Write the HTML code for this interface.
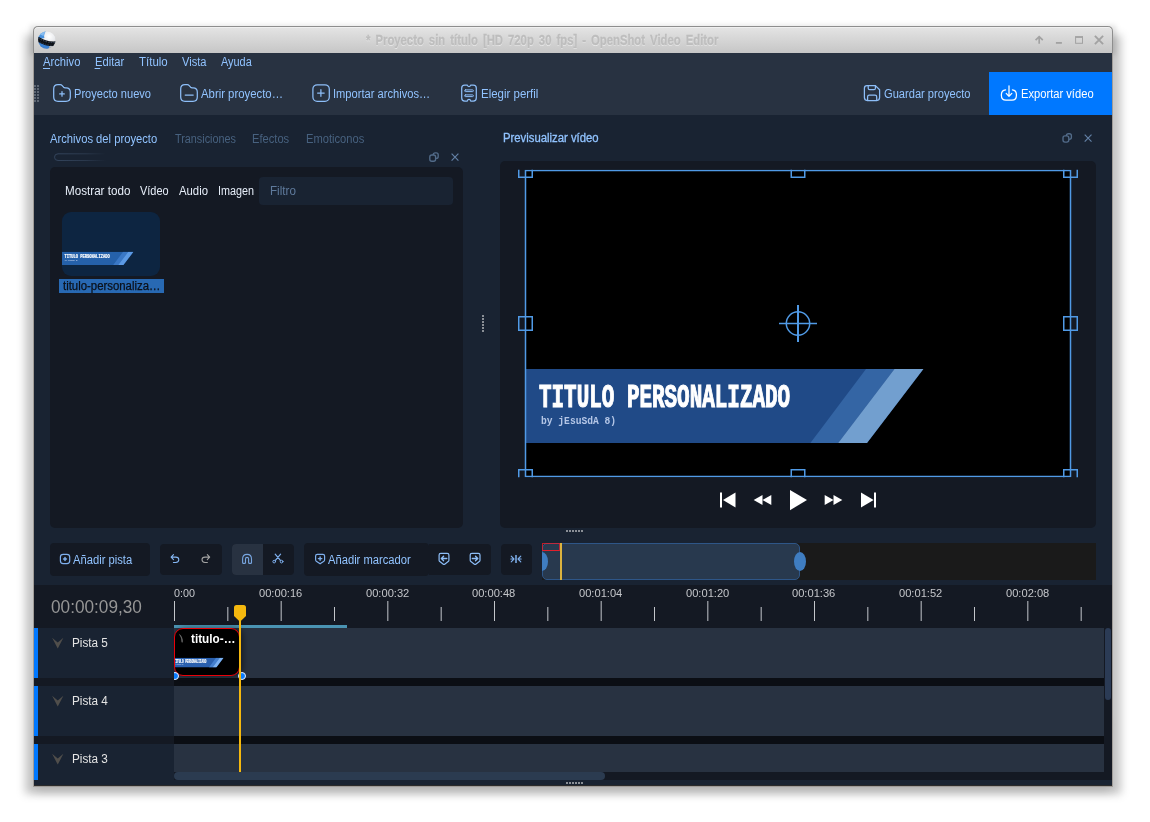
<!DOCTYPE html>
<html lang="es">
<head>
<meta charset="utf-8">
<title>* Proyecto sin título [HD 720p 30 fps] - OpenShot Video Editor</title>
<style>
html,body{margin:0;padding:0;background:#fff;}
body{width:1150px;height:822px;overflow:hidden;font-family:"Liberation Sans",sans-serif;}
#app{position:relative;width:1150px;height:822px;overflow:hidden;}
#app div,#app span.t,#app svg{position:absolute;}
.t{white-space:pre;transform-origin:0 50%;}
#tl{left:0;top:0;width:1150px;height:822px;will-change:transform;}
/* window */
#shadow{left:25px;top:35px;width:1096px;height:759px;background:rgba(0,0,0,.225);filter:blur(4.5px);}
#shadow3{left:30px;top:24.5px;width:1086px;height:30px;background:rgba(0,0,0,.1);filter:blur(2.5px);}
#shadow2{left:36px;top:720px;width:1074px;height:73px;background:rgba(0,0,0,.09);filter:blur(4.5px);}
#win{left:33px;top:26px;width:1080px;height:761px;border-radius:5px 5px 0 0;overflow:hidden;background:#a09c98;}
#winbg{left:1px;top:27px;width:1078px;height:732px;background:#192332;border-bottom:1px solid #2b2b2b;}
#titlebar{left:0;top:0;width:1080px;height:27px;background:linear-gradient(#e6e6e6,#dcdcdc 30%,#c6c6c6);
  box-shadow:inset 0 1px 0 #8e8e8e, inset 1px 0 0 #8e8e8e, inset -1px 0 0 #8e8e8e, inset 0 2px 0 #f0f0f0;border-radius:5px 5px 0 0;}
.bar{background:#283241;}
.panel{background:#141923;border-radius:5px;}
.box{background:#141923;border-radius:4px;}
.frame{width:545px;height:306px;background:#000;overflow:hidden;transform-origin:0 0;}
.frame .bn{left:0;top:198.5px;width:400px;height:74px;}
.ft1{left:13.5px;font-weight:700;color:#fff;white-space:pre;transform-origin:0 50%;}

</style>
</head>
<body>
<div id="app">
<div id="shadow"></div><div id="shadow2"></div><div id="shadow3"></div>
<div id="win">
  <div id="titlebar"></div>
  <div id="winbg"></div>
</div>
<!-- menubar + toolbar -->
<div class="bar" style="left:34px;top:53px;width:1078px;height:62px;"></div>
<div style="left:989px;top:72px;width:123px;height:43px;background:#0078ff;"></div>
<!-- left dock -->
<div class="panel" style="left:50px;top:167px;width:413px;height:361px;"></div>
<div style="left:259px;top:177px;width:194px;height:28px;background:#192332;border-radius:4px;"></div>
<div style="left:62px;top:212px;width:98px;height:64px;border-radius:9px;background:#0d2541;overflow:hidden;">
  <div class="frame" style="left:0;top:4.3px;transform:scale(0.1798);background:transparent;">
    <svg class="bn" viewBox="0 0 400 74"><polygon points="0,0 397.4,0 341,74 0,74" fill="#2561aa"/><polygon points="340,0 368.5,0 312.2,74 284.4,74" fill="#3a78c6"/><polygon points="368.5,0 397.4,0 341,74 312.2,74" fill="#5c9ae4"/></svg>
    <span class="ft1" style="position:absolute;left:13.5px;top:210px;font-family:'Liberation Mono',monospace;font-size:33px;line-height:36px;transform:scaleX(0.634);-webkit-text-stroke:1.2px #fff;">TITULO PERSONALIZADO</span>
    <span class="ft1" style="position:absolute;left:15.4px;top:243.4px;font-family:'Liberation Mono',monospace;font-size:11px;line-height:14px;color:#b4c6e6;transform:scaleX(0.875);">by jEsuSdA 8)</span>
  </div>
</div>
<div style="left:59px;top:279px;width:105px;height:14px;background:#2869b3;"></div>
<!-- right dock -->
<div class="panel" style="left:500px;top:161px;width:596px;height:367px;"></div>
<div class="frame" style="left:525.5px;top:170.5px;">
  <svg class="bn" viewBox="0 0 400 74"><polygon points="0,0 397.4,0 341,74 0,74" fill="#204a87"/><polygon points="340,0 368.5,0 312.2,74 284.4,74" fill="#3465a4"/><polygon points="368.5,0 397.4,0 341,74 312.2,74" fill="#729fcf"/></svg>
  <span class="ft1" style="position:absolute;left:13.5px;top:210px;font-family:'Liberation Mono',monospace;font-size:33px;line-height:36px;transform:scaleX(0.634);-webkit-text-stroke:1.2px #fff;">TITULO PERSONALIZADO</span>
  <span class="ft1" style="position:absolute;left:15.4px;top:243.4px;font-family:'Liberation Mono',monospace;font-size:11px;line-height:14px;color:#b4c6e6;transform:scaleX(0.875);">by jEsuSdA 8)</span>
</div>
<svg style="left:500px;top:161px;" width="596" height="367" viewBox="500 161 596 367">
  <defs><clipPath id="vc"><rect x="510" y="169.8" width="580" height="307.4"/></clipPath></defs>
  <g clip-path="url(#vc)" fill="none" stroke="#509ae6" stroke-width="1.5">
    <rect x="525.5" y="170.5" width="545" height="306"/>
    <rect x="518.75" y="163.75" width="13.5" height="13.5"/>
    <rect x="791.25" y="163.75" width="13.5" height="13.5"/>
    <rect x="1063.75" y="163.75" width="13.5" height="13.5"/>
    <rect x="518.75" y="316.75" width="13.5" height="13.5"/>
    <rect x="1063.75" y="316.75" width="13.5" height="13.5"/>
    <rect x="518.75" y="469.75" width="13.5" height="13.5"/>
    <rect x="791.25" y="469.75" width="13.5" height="13.5"/>
    <rect x="1063.75" y="469.75" width="13.5" height="13.5"/>
    <circle cx="798" cy="323.5" r="11.7"/>
    <path d="M779 323.5H817" />
    <path d="M798 305V342" stroke-width="2"/>
  </g>
  <!-- playback controls -->
  <g fill="#fff">
    <rect x="720" y="492.5" width="2" height="15"/><path d="M735.5 492.5V507.5L723 500Z"/>
    <path d="M762.5 495V505L753.7 500Z"/><path d="M771.3 495V505L762.5 500Z"/>
    <path d="M790 490L807 500L790 510.2Z"/>
    <path d="M824.7 495V505L833.5 500Z"/><path d="M833.5 495V505L842.3 500Z"/>
    <path d="M861 492.5V507.5L873.6 500Z"/><rect x="874" y="492.5" width="2" height="15"/>
  </g>
</svg>
<!-- timeline toolbar -->
<div class="box" style="left:50px;top:543px;width:100px;height:33px;"></div>
<div class="box" style="left:160px;top:544px;width:62px;height:31px;"></div>
<div class="box" style="left:232px;top:544px;width:62px;height:31px;overflow:hidden;"><div style="left:0;top:0;width:31px;height:31px;background:#283241;"></div></div>
<div class="box" style="left:429px;top:544px;width:62px;height:31px;border-radius:0 4px 4px 0;"></div>
<div class="box" style="left:304px;top:543px;width:125px;height:33px;"></div>
<div class="box" style="left:501px;top:544px;width:31px;height:31px;"></div>
<!-- zoom slider -->
<div style="left:542px;top:543px;width:554px;height:37px;background:#1a1a1a;"></div>
<div style="left:542px;top:543px;width:258px;height:37px;background:#28394e;border:1px solid #2e5688;border-radius:5px;box-sizing:border-box;"></div>
<div style="left:542px;top:543px;width:18px;height:8px;border:1px solid rgba(226,32,44,.8);border-bottom-color:#e2202c;box-sizing:border-box;"></div>
<div style="left:560px;top:543px;width:1.6px;height:37px;background:#dcb33e;"></div>
<div style="left:542px;top:552px;width:6px;height:19px;overflow:hidden;"><div style="left:-6px;top:0;width:12px;height:19px;border-radius:50%;background:#3f7dc1;"></div></div>
<div style="left:794px;top:552px;width:12px;height:19px;border-radius:50%;background:#3f7dc1;"></div>
<!-- ruler -->
<div style="left:34px;top:585px;width:1078px;height:43px;background:#141923;"></div>
<div style="left:174px;top:625px;width:173px;height:3px;background:#4a93b2;"></div>
<!-- tracks -->
<div style="left:34px;top:628px;width:140px;height:144px;background:#141923;"></div>
<div style="left:174px;top:628px;width:930px;height:144px;background:#0b0e14;"></div>
<div style="left:1104px;top:628px;width:8px;height:152px;background:#141923;"></div>
<div style="left:174px;top:772px;width:930px;height:8px;background:#141923;"></div>
<div style="left:34px;top:628px;width:140px;height:50px;background:#192332;"></div>
<div style="left:34px;top:686px;width:140px;height:50px;background:#192332;"></div>
<div style="left:34px;top:744px;width:140px;height:36px;background:#192332;"></div>
<div style="left:34px;top:628px;width:4px;height:50px;background:#0078ff;"></div>
<div style="left:34px;top:686px;width:4px;height:50px;background:#0078ff;"></div>
<div style="left:34px;top:744px;width:4px;height:36px;background:#0078ff;"></div>
<div style="left:174px;top:628px;width:930px;height:50px;background:#283241;"></div>
<div style="left:174px;top:686px;width:930px;height:50px;background:#283241;"></div>
<div style="left:174px;top:744px;width:930px;height:28px;background:#283241;"></div>
<div style="left:1105px;top:628px;width:6px;height:72px;border-radius:3px;background:#2b3b55;"></div>
<div style="left:174px;top:772px;width:431px;height:8px;border-radius:4px;background:#2b3b50;"></div>
<!-- clip -->
<div style="left:174px;top:628px;width:66px;height:48px;border-radius:9px;background:#000;border:1px solid #ea0008;box-sizing:border-box;overflow:hidden;box-shadow:3px 0 6px rgba(0,0,0,.45);">
  <div class="frame" style="left:-3.5px;top:2.5px;transform:scale(0.1297);background:transparent;">
    <svg class="bn" viewBox="0 0 400 74"><polygon points="0,0 397.4,0 341,74 0,74" fill="#2a60ae"/><polygon points="340,0 368.5,0 312.2,74 284.4,74" fill="#4480d0"/><polygon points="368.5,0 397.4,0 341,74 312.2,74" fill="#7cb2f2"/></svg>
    <span class="ft1" style="position:absolute;left:13.5px;top:210px;font-family:'Liberation Mono',monospace;font-size:33px;line-height:36px;transform:scale(0.634,1.4);-webkit-text-stroke:1.2px #fff;">TITULO PERSONALIZADO</span>
    <span class="ft1" style="position:absolute;left:15.4px;top:243.4px;font-family:'Liberation Mono',monospace;font-size:11px;line-height:14px;color:#b4c6e6;transform:scaleX(0.875);">by jEsuSdA 8)</span>
  </div>
</div>
<!-- overlay svg: ticks, playhead, icons -->
<svg style="left:0;top:0;" width="1150" height="822" viewBox="0 0 1150 822">
  <g id="ticks" stroke="#c3c6cb" stroke-width="1">
  <rect x="174.00" y="601" width="1" height="20" fill="#c3c6cb" stroke="none"/>
  <rect x="227.33" y="607" width="1" height="14" fill="#c3c6cb" stroke="none"/>
  <rect x="280.67" y="601" width="1" height="20" fill="#c3c6cb" stroke="none"/>
  <rect x="334.00" y="607" width="1" height="14" fill="#c3c6cb" stroke="none"/>
  <rect x="387.33" y="601" width="1" height="20" fill="#c3c6cb" stroke="none"/>
  <rect x="440.67" y="607" width="1" height="14" fill="#c3c6cb" stroke="none"/>
  <rect x="494.00" y="601" width="1" height="20" fill="#c3c6cb" stroke="none"/>
  <rect x="547.33" y="607" width="1" height="14" fill="#c3c6cb" stroke="none"/>
  <rect x="600.67" y="601" width="1" height="20" fill="#c3c6cb" stroke="none"/>
  <rect x="654.00" y="607" width="1" height="14" fill="#c3c6cb" stroke="none"/>
  <rect x="707.33" y="601" width="1" height="20" fill="#c3c6cb" stroke="none"/>
  <rect x="760.67" y="607" width="1" height="14" fill="#c3c6cb" stroke="none"/>
  <rect x="814.00" y="601" width="1" height="20" fill="#c3c6cb" stroke="none"/>
  <rect x="867.33" y="607" width="1" height="14" fill="#c3c6cb" stroke="none"/>
  <rect x="920.67" y="601" width="1" height="20" fill="#c3c6cb" stroke="none"/>
  <rect x="974.00" y="607" width="1" height="14" fill="#c3c6cb" stroke="none"/>
  <rect x="1027.33" y="601" width="1" height="20" fill="#c3c6cb" stroke="none"/>
  <rect x="1080.67" y="607" width="1" height="14" fill="#c3c6cb" stroke="none"/>
  </g>
  <!-- keyframe dots -->
  <circle cx="175" cy="676" r="3.5" fill="#0a7cff" stroke="#e8f0ff" stroke-width="1" clip-path="url(#kc)"/>
  <clipPath id="kc"><rect x="174" y="670" width="100" height="12"/></clipPath>
  <circle cx="242" cy="676" r="3.5" fill="#0a7cff" stroke="#e8f0ff" stroke-width="1"/>
  <!-- playhead -->
  <rect x="239" y="615" width="2" height="157" fill="#f5b80e"/>
  <path d="M234 607.5Q234 605 236.5 605H243.5Q246 605 246 607.5V616L240.8 621H239.2L234 616Z" fill="#f5b80e"/>
  <!-- app logo -->
  <defs>
    <radialGradient id="lg" cx="0.62" cy="0.3" r="0.75"><stop offset="0" stop-color="#ffffff"/><stop offset="0.55" stop-color="#e4e6ea"/><stop offset="1" stop-color="#8f949c"/></radialGradient>
    <clipPath id="lc"><circle cx="46.85" cy="40" r="8.8"/></clipPath>
  </defs>
  <g clip-path="url(#lc)">
    <circle cx="46.85" cy="40" r="8.8" fill="url(#lg)"/>
    <path d="M36 30H46.8Q43.2 33.5 44.4 38L36 40Z" fill="#4a92de"/>
    <path d="M39.5 34.2Q41.5 31.8 45.6 31.6Q43.6 33.8 43.6 36Z" fill="#86bdf0"/>
    <path d="M37 42L49.5 45.5Q49.5 48 47.5 50H37Z" fill="#3a80d2"/>
    <path d="M37.2 38.6Q46 44.6 56.6 43.6" stroke="#0c1016" stroke-width="4.7" fill="none"/>
    <path d="M38.2 37.9Q46.4 43.4 56 42.5" stroke="#4d5b73" stroke-width="0.9" stroke-dasharray="1.5 1.2" fill="none"/>
    <path d="M37.6 40.3Q46 46.2 56 45.2" stroke="#3a4659" stroke-width="0.8" stroke-dasharray="1.5 1.2" fill="none"/>
  </g>
  <!-- window buttons -->
  <g stroke="#a2a2a2" fill="none" stroke-width="1.7">
    <path d="M1039.2 43.8V37.2M1035.6 40.2L1039.2 36.6L1042.8 40.2" stroke-linejoin="miter"/>
    <path d="M1055.9 42.9H1061.9" stroke-width="1.8"/>
    <rect x="1075.6" y="37.2" width="6.9" height="6.1" stroke-width="1"/><path d="M1075.1 36.9H1083" stroke-width="1.6"/>
    <path d="M1094.9 35.9L1103.1 44.1M1103.1 35.9L1094.9 44.1" stroke-width="1.9"/>
  </g>
  <!-- menu mnemonics -->
  <rect x="43" y="68" width="7" height="1" fill="#91c3ff"/>
  <rect x="94.6" y="68" width="5.6" height="1" fill="#91c3ff"/>
  <!-- toolbar grip -->
  <g fill="#5d6673">
    <rect x="34" y="85" width="2" height="2"/><rect x="37" y="85" width="2" height="2"/><rect x="34" y="88" width="2" height="2"/><rect x="37" y="88" width="2" height="2"/><rect x="34" y="91" width="2" height="2"/><rect x="37" y="91" width="2" height="2"/><rect x="34" y="94" width="2" height="2"/><rect x="37" y="94" width="2" height="2"/><rect x="34" y="97" width="2" height="2"/><rect x="37" y="97" width="2" height="2"/><rect x="34" y="100" width="2" height="2"/><rect x="37" y="100" width="2" height="2"/>
  </g>
  <!-- toolbar icons -->
  <g fill="none" stroke="#8dbef8" stroke-width="1.25" stroke-linecap="round" stroke-linejoin="round">
    <path id="fold" d="M57.9 84.7H60.2Q61.4 84.7 62.2 85.6L63.6 87.2Q64.2 87.8 65.2 87.8H66.1Q70.3 87.8 70.3 92V97Q70.3 101.3 66 101.3H58Q53.7 101.3 53.7 97V88.9Q53.7 84.7 57.9 84.7Z"/>
    <path d="M62 91.6V96.2M59.7 93.9H64.3" stroke-width="1.25"/>
    <use href="#fold" x="127" y="0"/>
    <path d="M185.2 95.1H193.2"/>
    <rect x="312.9" y="84.8" width="16.4" height="16.5" rx="4.3"/>
    <path d="M320.9 89.7V96.3M317.6 93H324.2"/>
    <path d="M464.7 85H467.3Q467.6 86.6 469 86.6Q470.4 86.6 470.7 85H473.3Q476.3 85 476.3 88V98Q476.3 101 473.3 101H470.7Q470.4 99.4 469 99.4Q467.6 99.4 467.3 101H464.7Q461.7 101 461.7 98V88Q461.7 85 464.7 85Z"/>
    <rect x="464.6" y="89.9" width="8.8" height="1.7" rx="0.85" stroke-width="1"/>
    <rect x="464.6" y="94.9" width="8.8" height="1.7" rx="0.85" stroke-width="1"/>
    <path d="M867 85.6H875.4L879.6 89.8V97.6Q879.6 100.5 876.7 100.5H867.3Q864.4 100.5 864.4 97.6V88.2Q864.4 85.6 867 85.6Z"/>
    <path d="M868.2 85.8V88.2Q868.2 89.7 869.7 89.7H874Q875.4 89.7 875.4 88.2V85.8"/>
    <path d="M867.6 100.4V96.8Q867.6 95.1 869.3 95.1H875Q876.7 95.1 876.7 96.8V100.4"/>
  </g>
  <g fill="none" stroke="#ffffff" stroke-width="1.25" stroke-linecap="round" stroke-linejoin="round">
    <path d="M1005.6 89.8Q1001.4 90.2 1001.4 94.5V95.5Q1001.4 100.2 1006 100.2H1012Q1016.4 100.2 1016.4 95.5V94.5Q1016.4 90.2 1012.4 89.8"/>
    <path d="M1009 85.8V96M1006.2 93.4L1009 96.4L1011.8 93.4"/>
  </g>
  <!-- dock float / close icons -->
  <g fill="none" stroke="#526b89" stroke-width="1.35">
    <rect x="433.2" y="152.8" width="5" height="5.6" rx="2"/>
    <rect x="429.8" y="155" width="5.8" height="6.2" rx="2" fill="#192332"/>
    <rect x="1066.4" y="133.7" width="5" height="5.6" rx="2"/>
    <rect x="1063" y="135.9" width="5.8" height="6.2" rx="2" fill="#192332"/>
  </g>
  <g fill="none" stroke="#6381a6" stroke-width="1.15">
    <path d="M451.6 153.6L458.4 160.6M458.4 153.6L451.6 160.6"/>
    <path d="M1084.7 134.7L1091.5 141.7M1091.5 134.7L1084.7 141.7"/>
  </g>
  <!-- progress pill in dock title -->
  <defs><linearGradient id="pg" x1="0" x2="1"><stop offset="0" stop-color="#33445c"/><stop offset="0.6" stop-color="#2a384c"/><stop offset="1" stop-color="#192332"/></linearGradient></defs>
  <path d="M106 153.8H58Q54.5 153.8 54.5 157.2Q54.5 160.5 58 160.5H106" fill="none" stroke="url(#pg)" stroke-width="1"/>
  <!-- splitter handles -->
  <g fill="#8a8f96">
    <rect x="482" y="315" width="2" height="2"/><rect x="566" y="530" width="2" height="2"/><rect x="566" y="782" width="2" height="2"/><rect x="482" y="318" width="2" height="2"/><rect x="569" y="530" width="2" height="2"/><rect x="569" y="782" width="2" height="2"/><rect x="482" y="321" width="2" height="2"/><rect x="572" y="530" width="2" height="2"/><rect x="572" y="782" width="2" height="2"/><rect x="482" y="324" width="2" height="2"/><rect x="575" y="530" width="2" height="2"/><rect x="575" y="782" width="2" height="2"/><rect x="482" y="327" width="2" height="2"/><rect x="578" y="530" width="2" height="2"/><rect x="578" y="782" width="2" height="2"/><rect x="482" y="330" width="2" height="2"/><rect x="581" y="530" width="2" height="2"/><rect x="581" y="782" width="2" height="2"/>
  </g>
  <!-- timeline toolbar icons -->
  <g fill="none" stroke="#7fb0ee" stroke-width="1.2" stroke-linecap="round" stroke-linejoin="round">
    <rect x="60.4" y="554.3" width="9.3" height="9.3" rx="2.8"/>
    <path d="M65 557.6V560.4M63.6 559H66.4" stroke-width="1.5"/>
    <path d="M173.5 554.6L171.1 557.1L173.5 559.6M171.4 557.1H175.8Q178.8 557.1 178.8 559.8Q178.8 562.4 175.8 562.4H173.4" stroke="#86b8f5" stroke-width="1.05"/>
    <path d="M207.3 554.6L209.7 557.1L207.3 559.6M209.4 557.1H205Q202 557.1 202 559.8Q202 562.4 205 562.4H207.4" stroke="#a3a3a3" stroke-width="1.05"/>
    <path d="M242.6 562.4V559Q242.6 554.4 247.05 554.4Q251.5 554.4 251.5 559V562.4Q251.5 563.4 250.5 563.4H249.6Q248.6 563.4 248.6 562.4V559Q248.6 557.4 247.05 557.4Q245.5 557.4 245.5 559V562.4Q245.5 563.4 244.5 563.4H243.6Q242.6 563.4 242.6 562.4Z" stroke-width="1.1" stroke="#78a6e0"/>
    <path d="M275.2 554.2L280.4 560.4M280.6 554.2L275.4 560.4" stroke-width="1.2"/>
    <circle cx="274.2" cy="561.6" r="1.35" stroke-width="1"/><circle cx="281.6" cy="561.6" r="1.35" stroke-width="1"/>
    <path d="M317.3 554.4H322.9Q324.6 554.4 324.6 556.1V559.6Q324.6 560.6 323.9 561.2L320.1 563.8L316.3 561.2Q315.6 560.6 315.6 559.6V556.1Q315.6 554.4 317.3 554.4Z"/>
    <path d="M320.1 556.9V560.3M318.4 558.6H321.8" stroke-width="1.4"/>
    <path id="mk" d="M440.8 553.4H447.2Q448.9 553.4 448.9 555.1V560.2Q448.9 561 448.2 561.6L444.7 564.2Q444 564.7 443.3 564.2L439.8 561.6Q439.1 561 439.1 560.2V555.1Q439.1 553.4 440.8 553.4Z" stroke="#8dbef8"/>
    <path d="M441.4 558.5H446.8M443.6 556.2L441.3 558.5L443.6 560.8" stroke="#8dbef8" stroke-width="1.3"/>
    <use href="#mk" x="31.1" y="0"/>
    <path d="M472.3 558.5H477.7M475.5 556.2L477.8 558.5L475.5 560.8" stroke="#8dbef8" stroke-width="1.3"/>
    <path d="M516 555V563" stroke-width="1.8" stroke-linecap="butt" stroke="#6f9bd0"/>
    <path d="M511.2 556.2L514 559L511.2 561.8M510.8 559H513.6M520.8 556.2L518 559L520.8 561.8M521.2 559H518.4" stroke-width="1.1"/>
  </g>
  <!-- track chevrons -->
  <g fill="#504e4b">
    <path id="chev" d="M52.1 637.7L57.75 648.6L63.4 637.7L57.75 642.4Z"/>
    <use href="#chev" x="0" y="58"/>
    <use href="#chev" x="0" y="116"/>
  </g>
  <!-- clip menu glyph -->
  <path d="M178.8 633.8Q183.4 636.6 182.8 642.6L181.5 642.2Q181.8 638 178.8 633.8Z" fill="#646464"/>

</svg>

<!-- text layer -->
<div id="tl">
<span class="t" style="left:366.00px;top:31.20px;font-size:15px;line-height:18px;color:#bdbdbd;font-weight:700;transform:scaleX(0.7541);text-shadow:0 1px 0 #e9e9e9;-webkit-text-stroke:0.3px #bdbdbd;word-spacing:2.5px;">* Proyecto sin título [HD 720p 30 fps] - OpenShot Video Editor</span>
<span class="t" style="left:43.00px;top:54.84px;font-size:12px;line-height:14px;color:#91c3ff;transform:scaleX(0.9346);">Archivo</span>
<span class="t" style="left:94.60px;top:54.84px;font-size:12px;line-height:14px;color:#91c3ff;transform:scaleX(0.9343);">Editar</span>
<span class="t" style="left:138.70px;top:54.84px;font-size:12px;line-height:14px;color:#91c3ff;transform:scaleX(0.9562);">Título</span>
<span class="t" style="left:181.50px;top:54.84px;font-size:12px;line-height:14px;color:#91c3ff;transform:scaleX(0.9256);">Vista</span>
<span class="t" style="left:220.60px;top:54.84px;font-size:12px;line-height:14px;color:#91c3ff;transform:scaleX(0.9079);">Ayuda</span>
<span class="t" style="left:74.40px;top:86.84px;font-size:12px;line-height:14px;color:#91c3ff;transform:scaleX(0.9234);">Proyecto nuevo</span>
<span class="t" style="left:201.00px;top:86.84px;font-size:12px;line-height:14px;color:#91c3ff;transform:scaleX(0.9458);">Abrir proyecto…</span>
<span class="t" style="left:333.40px;top:86.84px;font-size:12px;line-height:14px;color:#91c3ff;transform:scaleX(0.9274);">Importar archivos…</span>
<span class="t" style="left:481.30px;top:86.84px;font-size:12px;line-height:14px;color:#91c3ff;transform:scaleX(0.9562);">Elegir perfil</span>
<span class="t" style="left:884.30px;top:86.84px;font-size:12px;line-height:14px;color:#91c3ff;transform:scaleX(0.9262);">Guardar proyecto</span>
<span class="t" style="left:1021.40px;top:86.84px;font-size:12px;line-height:14px;color:#ffffff;transform:scaleX(0.9302);">Exportar vídeo</span>
<span class="t" style="left:50.20px;top:131.84px;font-size:12px;line-height:14px;color:#91c3ff;transform:scaleX(0.9343);">Archivos del proyecto</span>
<span class="t" style="left:174.80px;top:131.84px;font-size:12px;line-height:14px;color:#47617f;transform:scaleX(0.9010);">Transiciones</span>
<span class="t" style="left:252.40px;top:131.84px;font-size:12px;line-height:14px;color:#47617f;transform:scaleX(0.9293);">Efectos</span>
<span class="t" style="left:306.30px;top:131.84px;font-size:12px;line-height:14px;color:#47617f;transform:scaleX(0.9298);">Emoticonos</span>
<span class="t" style="left:503.40px;top:130.84px;font-size:12px;line-height:14px;color:#91c3ff;transform:scaleX(0.9429);-webkit-text-stroke:0.3px #91c3ff;">Previsualizar vídeo</span>
<span class="t" style="left:64.60px;top:183.84px;font-size:12px;line-height:14px;color:#e6edf8;transform:scaleX(0.9709);">Mostrar todo</span>
<span class="t" style="left:140.00px;top:183.84px;font-size:12px;line-height:14px;color:#e6edf8;transform:scaleX(0.9120);">Vídeo</span>
<span class="t" style="left:178.60px;top:183.84px;font-size:12px;line-height:14px;color:#e6edf8;transform:scaleX(0.9445);">Audio</span>
<span class="t" style="left:218.00px;top:183.84px;font-size:12px;line-height:14px;color:#e6edf8;transform:scaleX(0.8993);">Imagen</span>
<span class="t" style="left:269.50px;top:183.84px;font-size:12px;line-height:14px;color:#5f7a9c;transform:scaleX(0.9711);">Filtro</span>
<span class="t" style="left:62.60px;top:278.84px;font-size:12px;line-height:14px;color:#0b1018;transform:scaleX(0.9482);-webkit-text-stroke:0.25px #0b1018;">titulo-personaliza…</span>
<span class="t" style="left:73.00px;top:552.84px;font-size:12px;line-height:14px;color:#91c3ff;transform:scaleX(0.9341);">Añadir pista</span>
<span class="t" style="left:328.00px;top:552.84px;font-size:12px;line-height:14px;color:#91c3ff;transform:scaleX(0.9322);">Añadir marcador</span>
<span class="t" style="left:51.20px;top:596.80px;font-size:17.6px;line-height:21px;color:#969696;transform:scaleX(0.9779);">00:00:09,30</span>
<span class="t" style="left:174.30px;top:586.02px;font-size:11.5px;line-height:14px;color:#c4c6ca;transform:scaleX(0.9379);">0:00</span>
<span class="t" style="left:258.87px;top:586.02px;font-size:11.5px;line-height:14px;color:#c4c6ca;transform:scaleX(0.9673);">00:00:16</span>
<span class="t" style="left:365.53px;top:586.02px;font-size:11.5px;line-height:14px;color:#c4c6ca;transform:scaleX(0.9673);">00:00:32</span>
<span class="t" style="left:472.20px;top:586.02px;font-size:11.5px;line-height:14px;color:#c4c6ca;transform:scaleX(0.9673);">00:00:48</span>
<span class="t" style="left:578.87px;top:586.02px;font-size:11.5px;line-height:14px;color:#c4c6ca;transform:scaleX(0.9673);">00:01:04</span>
<span class="t" style="left:685.53px;top:586.02px;font-size:11.5px;line-height:14px;color:#c4c6ca;transform:scaleX(0.9673);">00:01:20</span>
<span class="t" style="left:792.20px;top:586.02px;font-size:11.5px;line-height:14px;color:#c4c6ca;transform:scaleX(0.9673);">00:01:36</span>
<span class="t" style="left:898.87px;top:586.02px;font-size:11.5px;line-height:14px;color:#c4c6ca;transform:scaleX(0.9673);">00:01:52</span>
<span class="t" style="left:1005.54px;top:586.02px;font-size:11.5px;line-height:14px;color:#c4c6ca;transform:scaleX(0.9673);">00:02:08</span>
<span class="t" style="left:72.40px;top:635.84px;font-size:12px;line-height:14px;color:#e4e4e4;transform:scaleX(0.9785);">Pista 5</span>
<span class="t" style="left:72.40px;top:693.84px;font-size:12px;line-height:14px;color:#e4e4e4;transform:scaleX(0.9785);">Pista 4</span>
<span class="t" style="left:72.40px;top:751.84px;font-size:12px;line-height:14px;color:#e4e4e4;transform:scaleX(0.9785);">Pista 3</span>
<span class="t" style="left:191.40px;top:631.84px;font-size:12px;line-height:14px;color:#ffffff;font-weight:700;transform:scaleX(0.9795);">titulo-…</span>
</div>
</div>
</body>
</html>
